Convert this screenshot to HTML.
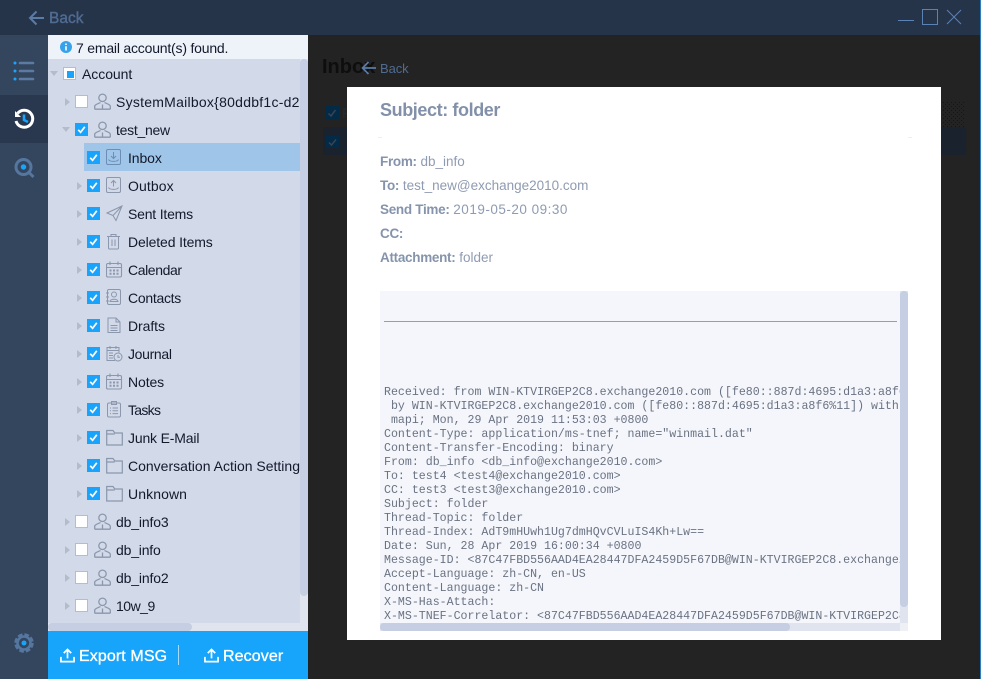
<!DOCTYPE html>
<html><head><meta charset="utf-8">
<style>
html,body{margin:0;padding:0;background:#232323}
body{width:981px;height:679px;position:relative;overflow:hidden;font-family:"Liberation Sans","Noto Sans CJK SC",sans-serif;font-size:14px}
.a{position:absolute}
.t{position:absolute;white-space:nowrap;line-height:20px;color:#131a2c}
.cb{position:absolute;width:11px;height:11px;background:#fff;border:1px solid #b3bdcf}
.ck{position:absolute;width:13px;height:13px;background:#18a3fc}
.ck svg{position:absolute;left:0;top:0}
.m{position:absolute;left:380px;white-space:nowrap;color:#8f9bb2;line-height:20px;font-size:13.5px}
.m b{color:#8594ac;letter-spacing:-.3px}
pre{position:absolute;left:384px;margin:0;font-family:"Liberation Mono",monospace;font-size:11.6px;line-height:14px;color:#6a7282}
svg{display:block}
.wb{color:#fff;font-size:16px;-webkit-text-stroke:.35px #fff}
</style></head><body>
<svg width="0" height="0" style="position:absolute">
<defs>
<symbol id="user" viewBox="0 0 17 17"><circle cx="8.500" cy="4.800" r="3.700" fill="none" stroke="#8a97ac" stroke-width="1.300"/><path d="M.7 16.200v-3c0-1.800 4.300-2.700 5.800-3.700M16.300 16.200v-3c0-1.800-4.300-2.700-5.800-3.700M.7 16.200h15.600M8.500 11.500v4.700" fill="none" stroke="#8a97ac" stroke-width="1.300"/></symbol>
<symbol id="folder" viewBox="0 0 17 17"><path d="M.7 16V1.500h6.300l1.800 2.500h7.500v12zM.7 5h8" fill="none" stroke="#8a97ac" stroke-width="1.200"/></symbol>
<symbol id="cal" viewBox="0 0 17 17"><rect x=".5" y="2.500" width="15" height="13.500" rx="1.500" fill="none" stroke="#8a97ac" stroke-width="1.100"/><path d="M.5 6.500h15M4 .5v3.500M12 .5v3.500" stroke="#8a97ac" fill="none" stroke-width="1.100"/><path d="M3.500 8.500h2v2h-2zM7 8.500h2v2H7zM10.500 8.500h2v2h-2zM3.500 11.800h2v2h-2zM7 11.800h2v2H7zM10.500 11.800h2v2h-2z" fill="#8a97ac"/></symbol>
<symbol id="up" viewBox="0 0 16 16"><path d="M1 9.500V14.500H15V9.500" fill="none" stroke="#fff" stroke-width="1.800"/><path d="M8 11V2M4 5.500L8 1.500 12 5.500" fill="none" stroke="#fff" stroke-width="1.800"/></symbol>
<symbol id="chk" viewBox="0 0 13 13"><path d="M3.200 6.800L5.600 9.300 9.800 3.800" fill="none" stroke="#fff" stroke-width="1.700"/></symbol>
<symbol id="ar" viewBox="0 0 6 8"><path d="M0 0v8l5-4z" fill="#b4bcca"/></symbol>
<pattern id="dots" width="4" height="4" patternUnits="userSpaceOnUse"><rect x="0" y="0" width="1" height="1" fill="#161616"/><rect x="2" y="2" width="1" height="1" fill="#161616"/></pattern>
</defs></svg>

<!-- title bar -->
<div class="a" style="left:0;top:0;width:981px;height:35px;background:#26344a"></div>
<svg class="a" style="left:28px;top:10px" width="18" height="16"><path d="M16 8H2M8.500 1.500L2 8l6.500 6.500" fill="none" stroke="#5a7ba6" stroke-width="2"/></svg>
<div class="t" style="left:49px;top:9px;font-size:15.500px;color:#4f6b91;-webkit-text-stroke:.4px #4f6b91">Back</div>
<div class="a" style="left:898px;top:20px;width:16px;height:1px;background:#5a82b5"></div>
<div class="a" style="left:922px;top:9px;width:14px;height:14px;border:1px solid #5a82b5"></div>
<svg class="a" style="left:946px;top:9px" width="17" height="17"><path d="M1 1l14 14M15 1L1 15" stroke="#5a82b5" fill="none"/></svg>
<div class="a" style="left:980px;top:0;width:1px;height:679px;background:#2f7fc4"></div>

<!-- sidebar -->
<div class="a" style="left:0;top:35px;width:48px;height:644px;background:#34465e"></div>
<div class="a" style="left:0;top:95px;width:48px;height:48px;background:#2a384f"></div>
<svg class="a" style="left:13px;top:61px" width="22" height="20"><circle cx="2" cy="2" r="1.500" fill="#18a3fc"/><circle cx="2" cy="10" r="1.500" fill="#18a3fc"/><circle cx="2" cy="18" r="1.500" fill="#18a3fc"/><path d="M7 2h13M7 10h13M7 18h13" stroke="#5d7aa3" stroke-width="2.600" stroke-linecap="round"/></svg>
<svg class="a" style="left:13px;top:108px" width="22" height="22"><path d="M4.500 5.500A8.500 8.500 0 1 1 3 13" fill="none" stroke="#fff" stroke-width="3"/><path d="M2 3l6 6H2z" fill="#fff"/><path d="M11 6.500v5.500l4 2" fill="none" stroke="#18a3fc" stroke-width="2.600"/></svg>
<svg class="a" style="left:14px;top:158px" width="22" height="22"><circle cx="9.500" cy="9" r="7.500" fill="none" stroke="#55769f" stroke-width="3"/><circle cx="9.500" cy="9" r="2.700" fill="#18a3fc"/><path d="M15 14.500l4.500 4.500" stroke="#55769f" stroke-width="3"/></svg>
<svg class="a" style="left:14px;top:633px" width="20" height="20"><circle cx="10" cy="10" r="6.500" fill="none" stroke="#55769f" stroke-width="2.600"/><circle cx="10" cy="10" r="8.500" fill="none" stroke="#55769f" stroke-width="2.500" stroke-dasharray="4.700 2"/><circle cx="10" cy="10" r="2.500" fill="#18a3fc"/></svg>

<!-- panel -->
<div class="a" style="left:48px;top:35px;width:260px;height:596px;background:#d2d9e8"></div>
<div class="a" style="left:48px;top:35px;width:260px;height:24px;background:#eef2f9"></div>
<svg class="a" style="left:60px;top:41px" width="12" height="12"><circle cx="6" cy="6" r="6" fill="#37a2ec"/><path d="M6 2.500v1.500M6 5.200v4.300" stroke="#fff" stroke-width="1.600"/></svg>
<div class="t" style="left:76px;top:38px;letter-spacing:-.2px">7 email account(s) found.</div>

<!-- scrollbars -->
<div class="a" style="left:300px;top:59px;width:8px;height:572px;background:#dfe4ef"></div>
<div class="a" style="left:300px;top:59px;width:8px;height:537px;background:#c5cee2;border-radius:4px"></div>
<div class="a" style="left:48px;top:623px;width:252px;height:8px;background:#dfe4ef"></div>
<div class="a" style="left:48px;top:623px;width:144px;height:8px;background:#c5cee2;border-radius:4px"></div>

<!-- tree -->
<div class="a" style="left:84px;top:143px;width:216px;height:28px;background:#9fc5e8"></div>

<svg class="a" style="left:50px;top:71px" width="8" height="6"><path d="M0 0h8L4 5z" fill="#b4bcca"/></svg>
<div class="cb" style="left:63px;top:67px"></div><div class="a" style="left:67px;top:71px;width:7px;height:7px;background:#18a3fc"></div>
<div class="t" style="left:82px;top:64px;letter-spacing:-.05px">Account</div>

<svg class="a" style="left:65px;top:98px" width="6" height="8"><use href="#ar"/></svg>
<div class="cb" style="left:75px;top:95px"></div>
<svg class="a" style="left:94px;top:93px" width="17" height="17"><use href="#user"/></svg>
<div class="t" style="left:116px;top:92px;width:184px;overflow:hidden;letter-spacing:.25px">SystemMailbox{80ddbf1c-d2d0-4b</div>

<svg class="a" style="left:62px;top:127px" width="8" height="6"><path d="M0 0h8L4 5z" fill="#b4bcca"/></svg>
<div class="ck" style="left:75px;top:123px"><svg width="13" height="13"><use href="#chk"/></svg></div>
<svg class="a" style="left:94px;top:121px" width="17" height="17"><use href="#user"/></svg>
<div class="t" style="left:116px;top:120px;letter-spacing:-.27px">test_new</div>

<!-- inbox -->
<div class="ck" style="left:87px;top:151px"><svg width="13" height="13"><use href="#chk"/></svg></div>
<svg class="a" style="left:106px;top:149px" width="16" height="16"><rect x=".5" y=".5" width="14" height="15" rx="1.500" fill="none" stroke="#6c8db5"/><path d="M7.500 3v6M5 7l2.500 2.500L10 7M2.500 10.500c1 2.500 9 2.500 10 0" fill="none" stroke="#6c8db5"/></svg>
<div class="t" style="left:128px;top:148px;letter-spacing:-.1px">Inbox</div>

<!-- outbox -->
<svg class="a" style="left:77px;top:182px" width="6" height="8"><use href="#ar"/></svg>
<div class="ck" style="left:87px;top:179px"><svg width="13" height="13"><use href="#chk"/></svg></div>
<svg class="a" style="left:106px;top:177px" width="16" height="16"><rect x=".5" y=".5" width="14" height="15" rx="1.500" fill="none" stroke="#8a97ac"/><path d="M7.500 9.500v-6M5 6l2.500-2.500L10 6M2.500 10.500c1 2.500 9 2.500 10 0" fill="none" stroke="#8a97ac"/></svg>
<div class="t" style="left:128px;top:176px;letter-spacing:.1px">Outbox</div>

<!-- sent -->
<svg class="a" style="left:77px;top:210px" width="6" height="8"><use href="#ar"/></svg>
<div class="ck" style="left:87px;top:207px"><svg width="13" height="13"><use href="#chk"/></svg></div>
<svg class="a" style="left:106px;top:205px" width="17" height="17"><path d="M16 1L1 8l6 2.500L10 15.500zM16 1L7 10.500" fill="none" stroke="#8a97ac"/></svg>
<div class="t" style="left:128px;top:204px;letter-spacing:-.2px">Sent Items</div>

<!-- deleted -->
<svg class="a" style="left:77px;top:238px" width="6" height="8"><use href="#ar"/></svg>
<div class="ck" style="left:87px;top:235px"><svg width="13" height="13"><use href="#chk"/></svg></div>
<svg class="a" style="left:106px;top:233px" width="16" height="17"><path d="M1 3.500h13M5 3.500V1.500h5v2M2.500 3.500V15a1 1 0 0 0 1 1h8a1 1 0 0 0 1-1V3.500M6 6.500v6.500M9 6.500v6.500" fill="none" stroke="#8a97ac"/></svg>
<div class="t" style="left:128px;top:232px;letter-spacing:-.13px">Deleted Items</div>

<!-- calendar -->
<svg class="a" style="left:77px;top:266px" width="6" height="8"><use href="#ar"/></svg>
<div class="ck" style="left:87px;top:263px"><svg width="13" height="13"><use href="#chk"/></svg></div>
<svg class="a" style="left:106px;top:261px" width="17" height="17"><use href="#cal"/></svg>
<div class="t" style="left:128px;top:260px;letter-spacing:-.4px">Calendar</div>

<!-- contacts -->
<svg class="a" style="left:77px;top:294px" width="6" height="8"><use href="#ar"/></svg>
<div class="ck" style="left:87px;top:291px"><svg width="13" height="13"><use href="#chk"/></svg></div>
<svg class="a" style="left:106px;top:289px" width="16" height="17"><rect x="1.500" y=".5" width="13" height="15" rx="1.500" fill="none" stroke="#8a97ac"/><circle cx="8" cy="5.500" r="2.500" fill="none" stroke="#8a97ac"/><path d="M4 12.500c0-3 8-3 8 0zM0 4h3M0 8h3M0 12h3" fill="none" stroke="#8a97ac"/></svg>
<div class="t" style="left:128px;top:288px;letter-spacing:-.28px">Contacts</div>

<!-- drafts -->
<svg class="a" style="left:77px;top:322px" width="6" height="8"><use href="#ar"/></svg>
<div class="ck" style="left:87px;top:319px"><svg width="13" height="13"><use href="#chk"/></svg></div>
<svg class="a" style="left:107px;top:317px" width="14" height="17"><path d="M1 1h8l4 4v10.500H1zM9 1v4h4M3.500 8.500h7M3.500 11h7M3.500 13.500h7" fill="none" stroke="#8a97ac"/></svg>
<div class="t" style="left:128px;top:316px;letter-spacing:-.07px">Drafts</div>

<!-- journal -->
<svg class="a" style="left:77px;top:350px" width="6" height="8"><use href="#ar"/></svg>
<div class="ck" style="left:87px;top:347px"><svg width="13" height="13"><use href="#chk"/></svg></div>
<svg class="a" style="left:106px;top:345px" width="17" height="17"><path d="M9 15.500H1v-13h12v5M4 1v3M10 1v3M1 5.500h12M3 8h4M3 10.500h4M3 13h4" fill="none" stroke="#8a97ac"/><circle cx="12" cy="12" r="4" fill="none" stroke="#8a97ac"/><path d="M12 10v2.200h2" fill="none" stroke="#8a97ac"/></svg>
<div class="t" style="left:128px;top:344px;letter-spacing:-.33px">Journal</div>

<!-- notes -->
<svg class="a" style="left:77px;top:378px" width="6" height="8"><use href="#ar"/></svg>
<div class="ck" style="left:87px;top:375px"><svg width="13" height="13"><use href="#chk"/></svg></div>
<svg class="a" style="left:106px;top:373px" width="17" height="17"><use href="#cal"/></svg>
<div class="t" style="left:128px;top:372px;letter-spacing:-.1px">Notes</div>

<!-- tasks -->
<svg class="a" style="left:77px;top:406px" width="6" height="8"><use href="#ar"/></svg>
<div class="ck" style="left:87px;top:403px"><svg width="13" height="13"><use href="#chk"/></svg></div>
<svg class="a" style="left:107px;top:401px" width="15" height="17"><rect x=".5" y="2" width="13" height="14" rx="1.500" fill="none" stroke="#8a97ac"/><path d="M4.500 .5h5v3h-5zM3 7h1M5.500 7h5.500M3 9.800h1M5.500 9.800h5.500M3 12.600h1M5.500 12.600h5.500" fill="none" stroke="#8a97ac"/></svg>
<div class="t" style="left:128px;top:400px;letter-spacing:-.7px">Tasks</div>

<!-- junk -->
<svg class="a" style="left:77px;top:434px" width="6" height="8"><use href="#ar"/></svg>
<div class="ck" style="left:87px;top:431px"><svg width="13" height="13"><use href="#chk"/></svg></div>
<svg class="a" style="left:106px;top:429px" width="17" height="17"><use href="#folder"/></svg>
<div class="t" style="left:128px;top:428px;letter-spacing:-.17px">Junk E-Mail</div>

<!-- conv -->
<svg class="a" style="left:77px;top:462px" width="6" height="8"><use href="#ar"/></svg>
<div class="ck" style="left:87px;top:459px"><svg width="13" height="13"><use href="#chk"/></svg></div>
<svg class="a" style="left:106px;top:457px" width="17" height="17"><use href="#folder"/></svg>
<div class="t" style="left:128px;top:456px;width:172px;overflow:hidden;letter-spacing:0">Conversation Action Settings</div>

<!-- unknown -->
<svg class="a" style="left:77px;top:490px" width="6" height="8"><use href="#ar"/></svg>
<div class="ck" style="left:87px;top:487px"><svg width="13" height="13"><use href="#chk"/></svg></div>
<svg class="a" style="left:106px;top:485px" width="17" height="17"><use href="#folder"/></svg>
<div class="t" style="left:128px;top:484px;letter-spacing:.1px">Unknown</div>

<!-- other accounts -->
<svg class="a" style="left:65px;top:518px" width="6" height="8"><use href="#ar"/></svg>
<div class="cb" style="left:75px;top:515px"></div>
<svg class="a" style="left:94px;top:513px" width="17" height="17"><use href="#user"/></svg>
<div class="t" style="left:116px;top:512px;letter-spacing:-.15px">db_info3</div>

<svg class="a" style="left:65px;top:546px" width="6" height="8"><use href="#ar"/></svg>
<div class="cb" style="left:75px;top:543px"></div>
<svg class="a" style="left:94px;top:541px" width="17" height="17"><use href="#user"/></svg>
<div class="t" style="left:116px;top:540px;letter-spacing:-.19px">db_info</div>

<svg class="a" style="left:65px;top:574px" width="6" height="8"><use href="#ar"/></svg>
<div class="cb" style="left:75px;top:571px"></div>
<svg class="a" style="left:94px;top:569px" width="17" height="17"><use href="#user"/></svg>
<div class="t" style="left:116px;top:568px;letter-spacing:-.15px">db_info2</div>

<svg class="a" style="left:65px;top:602px" width="6" height="8"><use href="#ar"/></svg>
<div class="cb" style="left:75px;top:599px"></div>
<svg class="a" style="left:94px;top:597px" width="17" height="17"><use href="#user"/></svg>
<div class="t" style="left:116px;top:596px;letter-spacing:-.5px">10w_9</div>

<!-- footer -->
<div class="a" style="left:48px;top:631px;width:260px;height:48px;background:#17a4fb"></div>
<svg class="a" style="left:60px;top:648px" width="15" height="15"><use href="#up"/></svg>
<div class="t wb" style="left:79px;top:647px;letter-spacing:.1px">Export MSG</div>
<div class="a" style="left:178px;top:645px;width:1px;height:20px;background:#a8dcfd"></div>
<svg class="a" style="left:204px;top:648px" width="15" height="15"><use href="#up"/></svg>
<div class="t wb" style="left:223px;top:647px;letter-spacing:.1px">Recover</div>

<!-- overlay background content -->
<div class="t" style="left:322px;top:55px;font-size:20px;line-height:24px;font-weight:bold;color:#0e0e0e">Inbox</div>
<div class="a" style="left:325px;top:106px;width:14px;height:14px;background:#032a47"></div>
<svg class="a" style="left:325px;top:106px" width="14" height="14"><path d="M3.500 7.500L6 10l4.500-6" fill="none" stroke="#3a4450" stroke-width="1.500"/></svg>
<div class="t" style="left:342px;top:103px;color:#232b3a">F</div>
<div class="a" style="left:323px;top:127px;width:643px;height:28px;background:#1a222e"></div>
<div class="a" style="left:326px;top:136px;width:13px;height:12px;background:#032a47"></div>
<svg class="a" style="left:326px;top:136px" width="13" height="12"><path d="M3 6.500L5.500 9 10 3.500" fill="none" stroke="#3a4450" stroke-width="1.500"/></svg>
<svg class="a" style="left:943px;top:102px" width="22" height="25"><rect width="22" height="25" fill="url(#dots)"/></svg>
<svg class="a" style="left:361px;top:61px" width="16" height="14"><path d="M15 7H1.500M7.500 1L1.500 7l6 6" fill="none" stroke="#5a7ba6" stroke-width="1.700"/></svg>
<div class="t" style="left:380px;top:59px;font-size:13px;color:#4f6b91;letter-spacing:-.1px">Back</div>

<!-- modal -->
<div class="a" style="left:347px;top:87px;width:594px;height:553px;background:#fff"></div>
<div class="t" style="left:380px;top:99px;font-size:18px;line-height:22px;font-weight:bold;color:#8291a9;letter-spacing:-.4px">Subject: folder</div>
<div class="a" style="left:378px;top:137px;width:4px;height:1px;background:#eceff4"></div>
<div class="a" style="left:908px;top:137px;width:4px;height:1px;background:#eceff4"></div>
<div class="m" style="top:152px"><b>From:</b> db_info</div>
<div class="m" style="top:176px"><b>To:</b> test_new@exchange2010.com</div>
<div class="m" style="top:200px"><b>Send Time:</b> <span style="letter-spacing:.5px">2019-05-20 09:30</span></div>
<div class="m" style="top:224px"><b>CC:</b></div>
<div class="m" style="top:248px"><b>Attachment:</b> folder</div>

<!-- body -->
<div class="a" style="left:380px;top:291px;width:528px;height:340px;background:#f4f6fb;overflow:hidden">
<div class="a" style="left:4px;top:30px;width:513px;height:1px;background:#9a9da5"></div>
<pre style="left:4px;top:93px;transform:translateY(2px)">Received: from WIN-KTVIRGEP2C8.exchange2010.com ([fe80::887d:4695:d1a3:a8f6%11]) by
 by WIN-KTVIRGEP2C8.exchange2010.com ([fe80::887d:4695:d1a3:a8f6%11]) with
 mapi; Mon, 29 Apr 2019 11:53:03 +0800
Content-Type: application/ms-tnef; name="winmail.dat"
Content-Transfer-Encoding: binary
From: db_info &lt;db_info@exchange2010.com&gt;
To: test4 &lt;test4@exchange2010.com&gt;
CC: test3 &lt;test3@exchange2010.com&gt;
Subject: folder
Thread-Topic: folder
Thread-Index: AdT9mHUwh1Ug7dmHQvCVLuIS4Kh+Lw==
Date: Sun, 28 Apr 2019 16:00:34 +0800
Message-ID: &lt;87C47FBD556AAD4EA28447DFA2459D5F67DB@WIN-KTVIRGEP2C8.exchange2010.com&gt;
Accept-Language: zh-CN, en-US
Content-Language: zh-CN
X-MS-Has-Attach:
X-MS-TNEF-Correlator: &lt;87C47FBD556AAD4EA28447DFA2459D5F67DB@WIN-KTVIRGEP2C8.exchange2010.com&gt;</pre>
<div class="a" style="left:520px;top:0;width:8px;height:340px;background:#dfe4ef"></div>
<div class="a" style="left:520px;top:0;width:8px;height:316px;background:#c5cee2;border-radius:4px"></div>
<div class="a" style="left:0;top:332px;width:520px;height:8px;background:#dfe4ef"></div>
<div class="a" style="left:0;top:332px;width:410px;height:8px;background:#c5cee2;border-radius:4px"></div>
<div class="a" style="left:520px;top:332px;width:8px;height:8px;background:#eef0f5"></div>
</div>
</body></html>
